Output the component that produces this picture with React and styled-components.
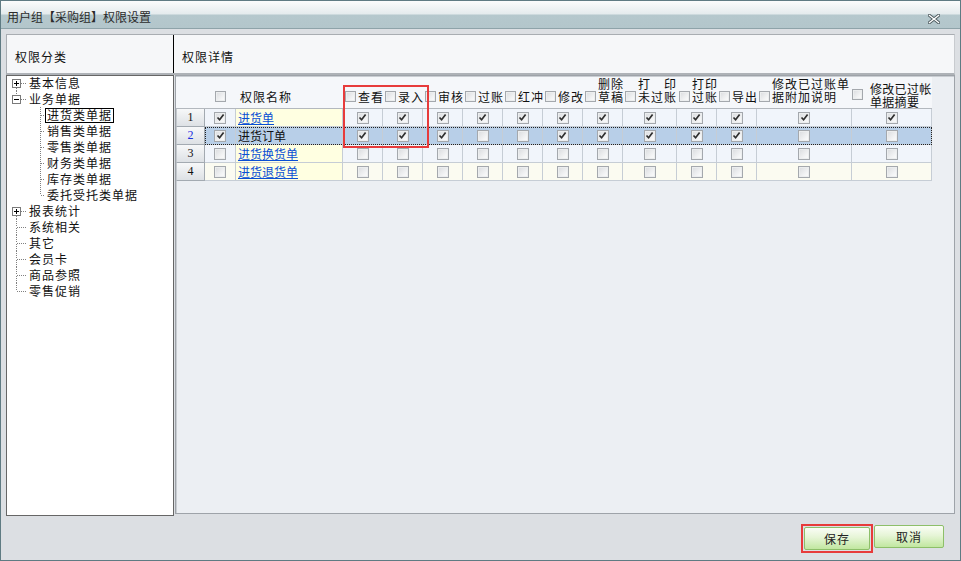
import React from 'react';
import styled, { createGlobalStyle, css } from 'styled-components';

const Global = createGlobalStyle`
  html, body { margin: 0; padding: 0; background: #dcdfe3; }
  body { font-family: "Noto Sans CJK SC", "Liberation Sans", sans-serif; font-size: 12px; color: #111; }
  * { box-sizing: border-box; }
`;

const Window = styled.div`
  width: 961px;
  height: 561px;
  border: 1px solid #5f7b83;
  display: flex;
  flex-direction: column;
  background: #dcdfe3;
  overflow: hidden;
`;

const TitleBar = styled.div`
  height: 28px;
  flex: none;
  border-bottom: 1px solid #8ea3a9;
  background: linear-gradient(#fbfcfc 0px, #e4ebed 13px, #b5c8cd 14px, #b3c6cb 100%);
  display: flex;
  align-items: flex-end;
  justify-content: space-between;
  padding: 0 20px 4px 6px;
`;

const TitleText = styled.span`
  font-size: 12px;
  line-height: 14px;
  color: #2b2b2b;
`;

const Body = styled.div`
  flex: 1;
  display: flex;
  flex-direction: column;
  padding: 5px 5px 0 5px;
  min-height: 0;
`;

const HeaderStrip = styled.div`
  height: 41px;
  flex: none;
  display: grid;
  grid-template-columns: 167px 1fr;
  background: #f6f7f9;
  border-top: 1px solid #a9adb2;
  border-left: 1px solid #a9adb2;
  border-right: 1px solid #c8cbcf;
  border-bottom: 2px solid #aeb2b7;
`;

const StripCell = styled.div`
  display: flex;
  align-items: center;
  padding-left: ${p => p.$pad}px;
  padding-top: 4px;
  letter-spacing: 1px;
  font-size: 12px;
  color: #111;
  ${p => p.$divider && css`border-right: 1px solid #000;`}
`;

const Main = styled.div`
  flex: none;
  height: 441px;
  display: flex;
  gap: 1px;
`;

const TreeBox = styled.div`
  width: 168px;
  flex: none;
  background: #fff;
  border: 1px solid #666;
`;

const TreeList = styled.div`
  margin-top: -1px;
`;

const TreeRow = styled.div`
  height: 16px;
  display: flex;
  align-items: center;
`;

const Gutter = styled.svg`
  flex: none;
  display: block;
`;

const TreeLabel = styled.span`
  border: 1px solid ${p => (p.$focus ? '#000' : 'transparent')};
  padding: 0 1px;
  height: 15px;
  line-height: 12px;
  font-size: 12px;
  letter-spacing: 1px;
  white-space: nowrap;
`;

const GridBox = styled.div`
  flex: 1;
  position: relative;
  background: #eceff3;
  border: 1px solid #9ea3a9;
  box-shadow: inset 1px 1px 0 #c9cdd2;
  margin-bottom: 2px;
`;

const HeadRow = styled.div`
  display: flex;
  height: 32px;
  margin-top: 1px;
  background: #f5f7fa;
  border-bottom: 1px solid #b3b8be;
  width: 756px;
`;

const COLS = '31px 107px 40px 40px 40px 40px 40px 40px 40px 54px 40px 40px 95px 80px';

const RowBody = styled.div`
  display: grid;
  grid-template-columns: ${COLS};
  ${p => p.$selected && css`outline: 1px dotted #222; outline-offset: -1px;`}
`;

const HeadCell = styled.div`
  display: flex;
  align-items: ${p => (p.$center ? 'center' : 'flex-end')};
  justify-content: ${p => (p.$justify ? 'center' : 'flex-start')};
  gap: ${p => p.$gap ?? 2}px;
  padding: ${p => (p.$center ? '2px 0 0 0' : '0 0 7px 2px')};
  padding-left: ${p => p.$pl ?? 2}px;
  font-size: 12px;
  line-height: 13px;
  letter-spacing: ${p => p.$ls ?? 1}px;
  white-space: pre;
  color: #111;
`;

const HeadLabel = styled.span`
  display: block;
`;

const RowNumHead = styled.div`
  width: 29px;
  flex: none;
`;

const DataRow = styled.div`
  display: flex;
  height: 18px;
  width: 756px;
`;

const RowNum = styled.div`
  width: 29px;
  flex: none;
  display: flex;
  align-items: center;
  justify-content: center;
  background: linear-gradient(#f7f8f9, #dde1e5);
  border-right: 1px solid #a3aab1;
  border-bottom: 1px solid #a3aab1;
  border-left: 1px solid #c3c8cd;
  font-family: "Liberation Serif", "DejaVu Serif", serif;
  font-size: 12px;
  color: ${p => (p.$active ? '#1b2fe0' : '#111')};
`;

const Cell = styled.div`
  display: flex;
  align-items: center;
  justify-content: ${p => (p.$left ? 'flex-start' : 'center')};
  padding-left: ${p => (p.$left ? '2px' : '0')};
  border-right: 1px solid #c6cdd5;
  border-bottom: 1px solid #c6cdd5;
  background: ${p => p.$bg};
  font-size: 12px;
  white-space: nowrap;
  overflow: hidden;
`;

const NameLink = styled.span`
  color: ${p => (p.$plain ? '#111' : '#0a4fd4')};
  text-decoration: ${p => (p.$plain ? 'none' : 'underline')};
  line-height: 14px;
`;

const Box = styled.span`
  display: inline-flex;
  align-items: center;
  justify-content: center;
  flex: none;
  width: ${p => p.$size}px;
  height: ${p => p.$size}px;
  border: 1px solid #a4a8ad;
  background: linear-gradient(135deg, #d9dbde 0%, #f4f5f6 70%, #fbfbfb 100%);
  box-shadow: inset 0 0 0 1px #eceeef;
  margin-bottom: ${p => p.$mb ?? 0}px;
`;

const RedMark = styled.div`
  position: absolute;
  left: 167px;
  top: 9px;
  width: 86px;
  height: 63px;
  border: 2px solid #e73b3b;
  pointer-events: none;
`;

const Footer = styled.div`
  flex: 1;
  display: flex;
  justify-content: flex-end;
  align-items: flex-start;
  padding: 8px 11px 0 0;
  gap: 1px;
`;

const RedFrame = styled.div`
  border: 2px solid #e73b3b;
  padding: 1px;
  display: flex;
`;

const Button = styled.button`
  width: ${p => p.$w}px;
  height: 23px;
  margin-top: ${p => p.$mt ?? 0}px;
  border: 1px solid #8dbf69;
  border-radius: 2px;
  background: linear-gradient(#fafdf6 0%, #e6f5d6 45%, #c1e7a0 100%);
  font-family: "Noto Sans CJK SC", sans-serif;
  font-size: 12px;
  letter-spacing: 1px;
  color: #222;
  padding: 0;
  cursor: pointer;
`;

function Check({ checked, size = 12, mb }) {
  return (
    <Box $size={size} $mb={mb}>
      {checked && (
        <svg width="9" height="9" viewBox="0 0 9 9">
          <path d="M1.5 4.5 L3.6 6.8 L7.6 1.6" fill="none" stroke="#2e2e2e" strokeWidth="1.7" />
        </svg>
      )}
    </Box>
  );
}

function TopGutter({ up, down, box }) {
  return (
    <Gutter width="20" height="16" viewBox="0 0 20 16">
      {up && <line x1="9.5" y1="0" x2="9.5" y2="8" stroke="#808080" strokeDasharray="1 1" />}
      {down && <line x1="9.5" y1="9" x2="9.5" y2="16" stroke="#808080" strokeDasharray="1 1" />}
      <line x1="10" y1="8.5" x2="20" y2="8.5" stroke="#808080" strokeDasharray="1 1" />
      {box && (
        <g>
          <rect x="5.5" y="4.5" width="8" height="8" fill="#fff" stroke="#7a7a7a" />
          <line x1="7" y1="8.5" x2="12" y2="8.5" stroke="#000" />
          {box === 'plus' && <line x1="9.5" y1="6" x2="9.5" y2="11" stroke="#000" />}
        </g>
      )}
    </Gutter>
  );
}

function ChildGutter({ last }) {
  return (
    <Gutter width="18" height="16" viewBox="0 0 18 16">
      <line x1="13.5" y1="0" x2="13.5" y2={last ? 8 : 16} stroke="#808080" strokeDasharray="1 1" />
      <line x1="14" y1="8.5" x2="18" y2="8.5" stroke="#808080" strokeDasharray="1 1" />
    </Gutter>
  );
}

const tree = [
  { label: '基本信息', box: 'plus', up: false, down: true },
  {
    label: '业务单据', box: 'minus', up: true, down: false,
    children: ['进货类单据', '销售类单据', '零售类单据', '财务类单据', '库存类单据', '委托受托类单据'],
  },
  { label: '报表统计', box: 'plus', up: false, down: true },
  { label: '系统相关', up: true, down: true },
  { label: '其它', up: true, down: true },
  { label: '会员卡', up: true, down: true },
  { label: '商品参照', up: true, down: true },
  { label: '零售促销', up: true, down: false },
];

const headers = [
  { label: '查看' },
  { label: '录入' },
  { label: '审核' },
  { label: '过账' },
  { label: '红冲' },
  { label: '修改' },
  { label: '删除\n草稿' },
  { label: '打\u3000印\n未过账' },
  { label: '打印\n过账' },
  { label: '导出' },
  { label: '修改已过账单\n据附加说明' },
  { label: '修改已过帐\n单据摘要', center: true },
];

const rows = [
  { n: 1, name: '进货单', on: true, perms: [1, 1, 1, 1, 1, 1, 1, 1, 1, 1, 1, 1], bg: '#f1f5fb', nameBg: '#ffffe1' },
  { n: 2, name: '进货订单', on: true, perms: [1, 1, 1, 0, 0, 1, 1, 1, 1, 1, 0, 0], bg: '#b8cfe8', nameBg: '#b8cfe8', selected: true },
  { n: 3, name: '进货换货单', on: false, perms: Array(12).fill(0), bg: '#f1f5fb', nameBg: '#ffffe1' },
  { n: 4, name: '进货退货单', on: false, perms: Array(12).fill(0), bg: '#fbfbf1', nameBg: '#ffffe1' },
];

export default function App() {
  return (
    <>
      <Global />
      <Window>
        <TitleBar>
          <TitleText>用户组【采购组】权限设置</TitleText>
          <svg width="12" height="10" viewBox="0 0 12 10">
            <path d="M1.5 1.5 L10.5 8.5 M10.5 1.5 L1.5 8.5" stroke="#4d5a5e" strokeWidth="3.2" strokeLinecap="square" />
            <path d="M1.5 1.5 L10.5 8.5 M10.5 1.5 L1.5 8.5" stroke="#ffffff" strokeWidth="1.4" strokeLinecap="square" />
          </svg>
        </TitleBar>
        <Body>
          <HeaderStrip>
            <StripCell $pad={8} $divider>权限分类</StripCell>
            <StripCell $pad={8}>权限详情</StripCell>
          </HeaderStrip>
          <Main>
            <TreeBox>
              <TreeList>
                {tree.map(item => (
                  <React.Fragment key={item.label}>
                    <TreeRow>
                      <TopGutter up={item.up} down={item.down} box={item.box} />
                      <TreeLabel>{item.label}</TreeLabel>
                    </TreeRow>
                    {item.children &&
                      item.children.map((c, i) => (
                        <TreeRow key={c}>
                          <Gutter width="20" height="16" />
                          <ChildGutter last={i === item.children.length - 1} />
                          <TreeLabel $focus={i === 0}>{c}</TreeLabel>
                        </TreeRow>
                      ))}
                  </React.Fragment>
                ))}
              </TreeList>
            </TreeBox>
            <GridBox>
              <HeadRow>
                <RowNumHead />
                <RowBody>
                  <HeadCell $justify $pl={0}>
                    <Check size={11} mb={1} />
                  </HeadCell>
                  <HeadCell $pl={4}>
                    <HeadLabel>权限名称</HeadLabel>
                  </HeadCell>
                  {headers.map(h => (
                    <HeadCell
                      key={h.label}
                      $center={h.center}
                      $gap={h.center ? 7 : 2}
                      $pl={h.center ? 0 : 2}
                      $ls={h.center ? 0.3 : 1}
                    >
                      <Check size={11} mb={h.center ? 0 : 1} />
                      <HeadLabel>{h.label}</HeadLabel>
                    </HeadCell>
                  ))}
                </RowBody>
              </HeadRow>
              {rows.map(r => (
                <DataRow key={r.n}>
                  <RowNum $active={r.selected}>{r.n}</RowNum>
                  <RowBody $selected={r.selected}>
                    <Cell $bg={r.bg}>
                      <Check checked={r.on} />
                    </Cell>
                    <Cell $bg={r.nameBg} $left>
                      <NameLink $plain={r.selected}>{r.name}</NameLink>
                    </Cell>
                    {r.perms.map((p, i) => (
                      <Cell key={i} $bg={r.bg}>
                        <Check checked={!!p} />
                      </Cell>
                    ))}
                  </RowBody>
                </DataRow>
              ))}
              <RedMark />
            </GridBox>
          </Main>
          <Footer>
            <RedFrame>
              <Button $w={66}>保存</Button>
            </RedFrame>
            <Button $w={70} $mt={1}>取消</Button>
          </Footer>
        </Body>
      </Window>
    </>
  );
}
